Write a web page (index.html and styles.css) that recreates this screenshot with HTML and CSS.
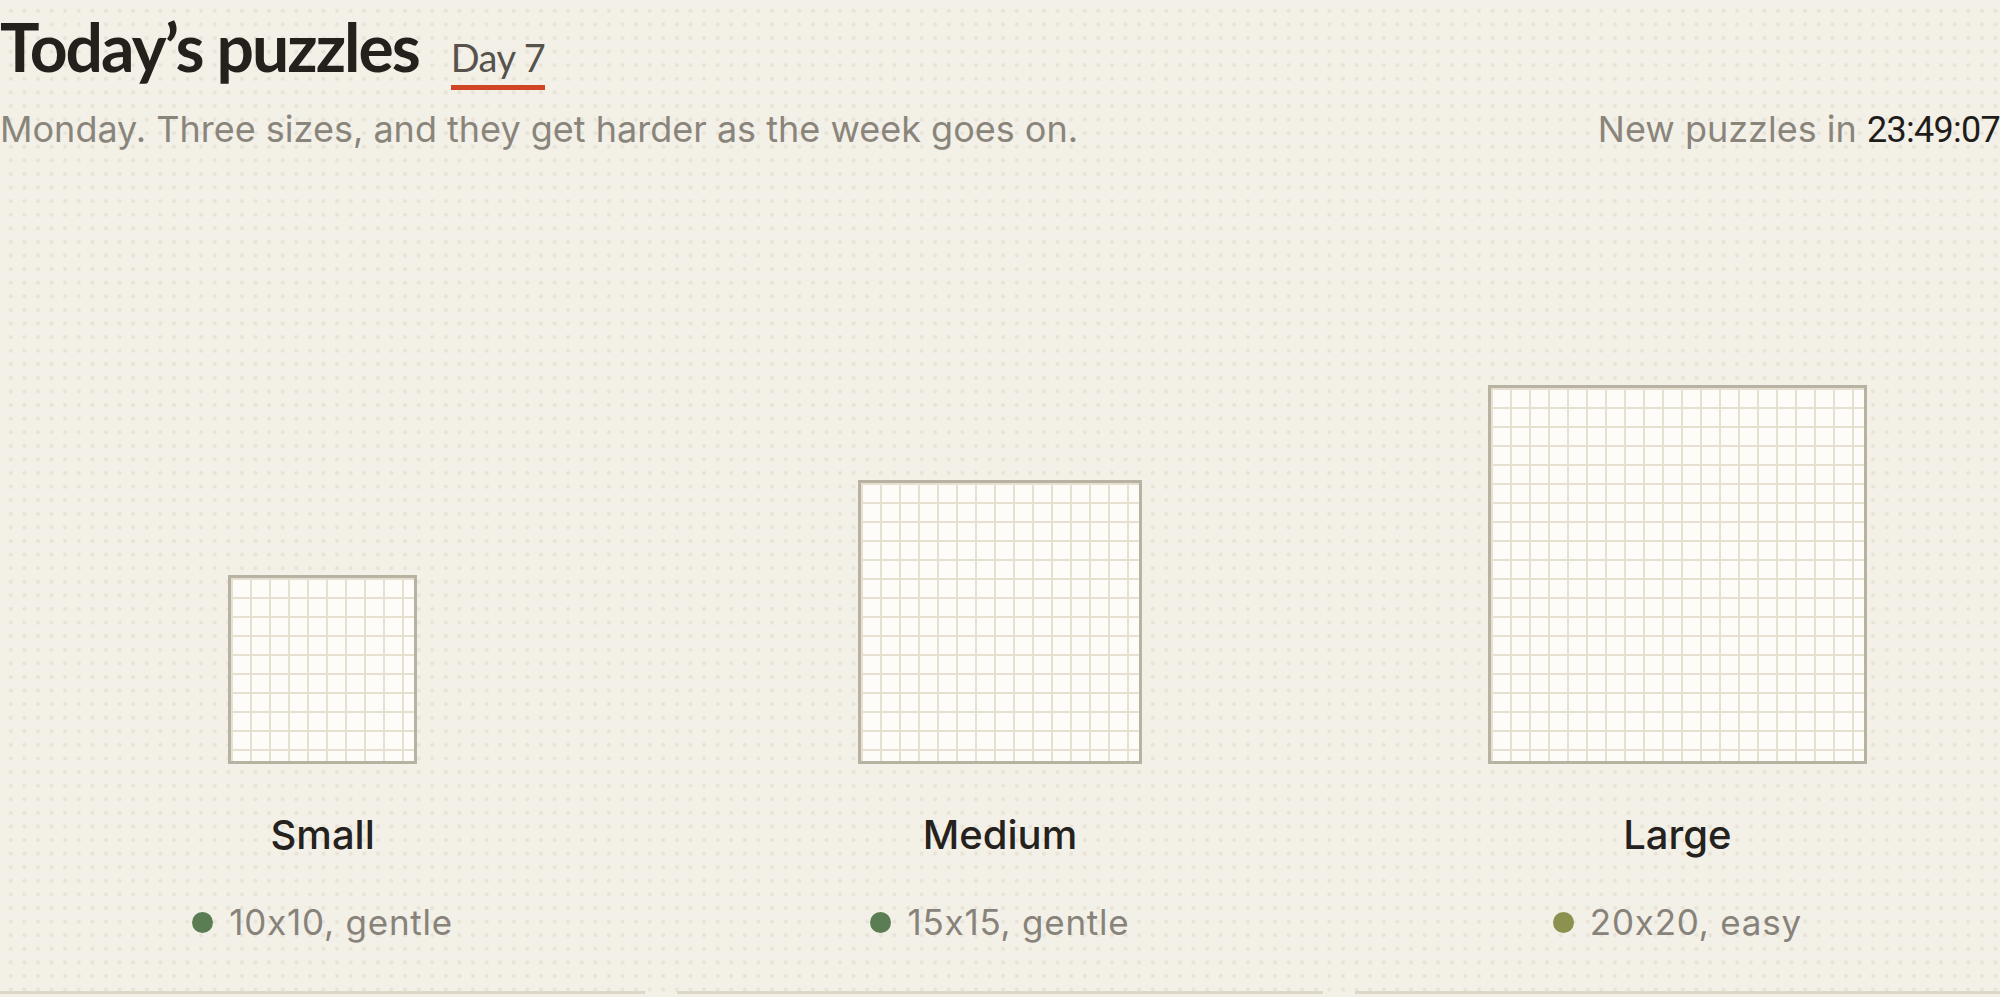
FILE: index.html
```html
<!DOCTYPE html>
<html lang="en">
<head>
<meta charset="utf-8">
<title>Today's puzzles</title>
<link rel="stylesheet" href="styles.css">
</head>
<body>
<main class="page">
  <header class="head">
    <div class="title-row">
      <h1 class="title">Today’s puzzles</h1>
      <span class="day">Day 7</span>
    </div>
    <div class="sub-row">
      <p class="sub">Monday. Three sizes, and they get harder as the week goes on.</p>
      <p class="timer">New puzzles in <span class="time">23:49:07</span></p>
    </div>
  </header>
  <section class="cards">
    <article class="card">
      <div class="board board-small"></div>
      <h2 class="label">Small</h2>
      <p class="meta"><span class="dot dot-gentle"></span>10x10, gentle</p>
    </article>
    <article class="card">
      <div class="board board-medium"></div>
      <h2 class="label">Medium</h2>
      <p class="meta"><span class="dot dot-gentle"></span>15x15, gentle</p>
    </article>
    <article class="card">
      <div class="board board-large"></div>
      <h2 class="label">Large</h2>
      <p class="meta"><span class="dot dot-easy"></span>20x20, easy</p>
    </article>
  </section>
</main>
</body>
</html>
```
FILE: styles.css
```css
html, body {
  margin: 0;
  padding: 0;
}
body {
  width: 2000px;
  height: 997px;
  overflow: hidden;
  background-color: #f3f0e8;
  background-image: radial-gradient(circle, #e8e3d6 1.7px, transparent 2.3px);
  background-size: 13.6px 13.6px;
  background-position: 4px 4px;
  font-family: "Inter", "Liberation Sans", sans-serif;
  font-feature-settings: "calt" 0;
  color: #2a2723;
}
.page {
  display: flex;
  flex-direction: column;
}
.head {
  padding-top: 14px;
}
.title-row {
  display: flex;
  align-items: baseline;
  gap: 32px;
}
.title {
  margin: 0;
  font-family: "Lato", "Liberation Sans", sans-serif;
  font-weight: 700;
  font-size: 66px;
  line-height: 1;
  letter-spacing: -0.03em;
  color: #24211d;
}
.day {
  display: inline-block;
  font-family: "Lato", "Liberation Sans", sans-serif;
  font-size: 38px;
  line-height: 1;
  color: #57524b;
  padding-bottom: 9px;
  border-bottom: 5px solid #cf4526;
  letter-spacing: -0.015em;
}
.sub-row {
  display: flex;
  justify-content: space-between;
  align-items: baseline;
  margin-top: 17px;
}
.sub, .timer {
  margin: 0;
  font-size: 36px;
  line-height: 44px;
  color: #8a857b;
}
.time {
  font-family: "Roboto", "Liberation Sans", sans-serif;
  color: #1f1d1a;
  letter-spacing: -0.02em;
}
.cards {
  display: grid;
  grid-template-columns: repeat(3, 1fr);
  column-gap: 32px;
  align-items: end;
  margin-top: 233px;
}
.card {
  display: flex;
  flex-direction: column;
  align-items: center;
  padding-bottom: 49px;
  border-bottom: 3px solid #ddd7c6;
}
.board {
  box-sizing: border-box;
  border: 3px solid #b8b2a3;
  background-color: #fdfcf8;
  background-image:
    linear-gradient(to right, transparent 17px, #e6e0d0 17px),
    linear-gradient(to bottom, transparent 17px, #e6e0d0 17px);
  background-size: 19px 19px;
  background-position: 2px 2px;
}
.board-small { width: 189px; height: 189px; }
.board-medium { width: 284px; height: 284px; }
.board-large { width: 379px; height: 379px; }
.label {
  margin: 47px 0 0;
  font-family: "Inter", "Liberation Sans", sans-serif;
  font-weight: 500;
  font-size: 40px;
  line-height: 48px;
  color: #25221e;
}
.meta {
  display: flex;
  align-items: center;
  gap: 16px;
  margin: 43px 0 0;
  font-size: 35px;
  line-height: 40px;
  letter-spacing: 0.022em;
  color: #88837a;
}
.dot {
  width: 21px;
  height: 21px;
  border-radius: 50%;
  flex: none;
}
.dot-gentle { background: #5b7d53; }
.dot-easy { background: #8d9150; }
```
